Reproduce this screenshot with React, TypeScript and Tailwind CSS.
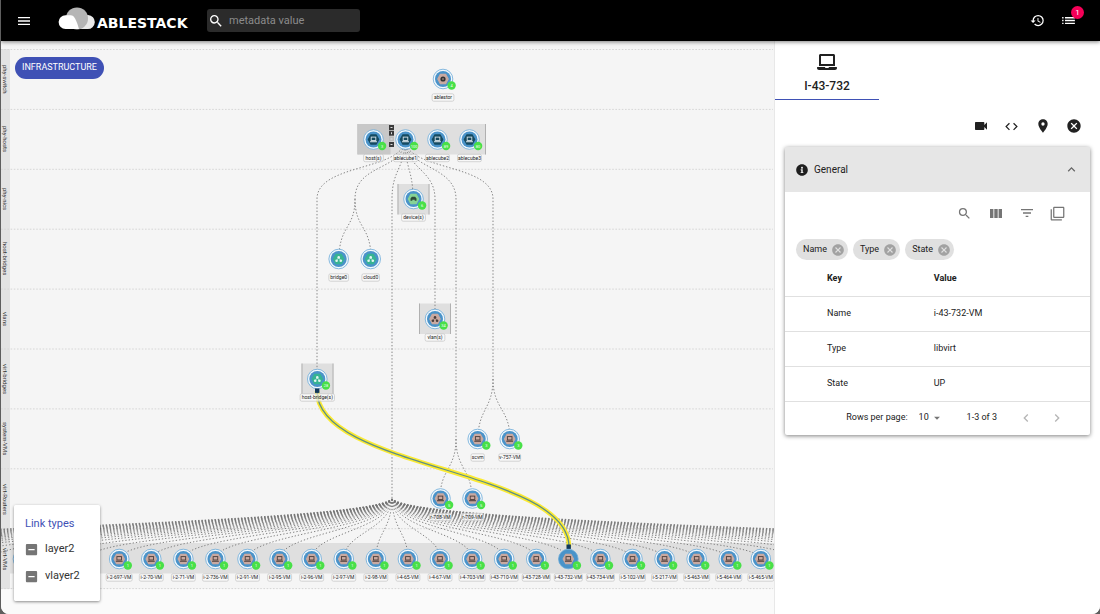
import type { ReactNode } from "react";
import { FaInfoCircle, FaLaptop } from "react-icons/fa";
import {
  MdArrowDropDown,
  MdCancel,
  MdChevronLeft,
  MdChevronRight,
  MdCode,
  MdFilterList,
  MdFilterNone,
  MdHistory,
  MdIndeterminateCheckBox,
  MdKeyboardArrowUp,
  MdList,
  MdLocationOn,
  MdMenu,
  MdSearch,
  MdVideocam,
} from "react-icons/md";

const lanes = [
  "phy-switch",
  "phy-hosts",
  "phy-nics",
  "host-bridges",
  "vlans",
  "virt-bridges",
  "system-VMs",
  "virt-Routers",
  "virt-VMs",
];

type Glyph = "laptop" | "bridge" | "disc" | "port";

interface NodeProps {
  x: number;
  y: number;
  label: string;
  fill: string;
  ink: string;
  glyph: Glyph;
  badge?: string;
  selected?: boolean;
}

const PINK = "#c9a9a1";
const TEAL = "#36b492";
const NAVY = "#154a60";

const HUB_X = 392;
const VM_START = 119.2;
const VM_STEP = 32.08;

const vmNames = [
  "2-697", "2-70", "2-71", "2-736", "2-91", "2-95", "2-96", "2-97", "2-98", "4-65", "4-67",
  "4-703", "43-710", "43-728", "43-732", "43-734", "5-102", "5-217", "5-463", "5-464", "5-465",
];

const vms: NodeProps[] = vmNames.map((name, i) => ({
  x: VM_START + i * VM_STEP,
  y: 559,
  label: `i-${name}-VM`,
  fill: PINK,
  ink: "#4a3c3a",
  glyph: "laptop",
  badge: "1",
  selected: name === "43-732",
}));

const nodes: NodeProps[] = [
  { x: 443, y: 79, label: "ablestor", fill: PINK, ink: "#333", glyph: "disc", badge: "4" },
  { x: 373.5, y: 139.5, label: "host(s)", fill: NAVY, ink: "#d5e2e8", glyph: "laptop", badge: "3" },
  { x: 405.5, y: 139.5, label: "ablecube1", fill: NAVY, ink: "#d5e2e8", glyph: "laptop", badge: "100" },
  { x: 437.5, y: 139.5, label: "ablecube2", fill: NAVY, ink: "#d5e2e8", glyph: "laptop", badge: "89" },
  { x: 469.5, y: 139.5, label: "ablecube3", fill: NAVY, ink: "#d5e2e8", glyph: "laptop", badge: "80" },
  { x: 413.5, y: 199, label: "device(s)", fill: "#86d396", ink: "#2f4a38", glyph: "port", badge: "6" },
  { x: 338.7, y: 259, label: "bridge0", fill: TEAL, ink: "#e3f6f0", glyph: "bridge" },
  { x: 370.7, y: 259, label: "cloud0", fill: TEAL, ink: "#e3f6f0", glyph: "bridge" },
  { x: 435, y: 319, label: "vlan(s)", fill: PINK, ink: "#4a3c3a", glyph: "bridge", badge: "34" },
  { x: 317.3, y: 379, label: "host-bridge(s)", fill: TEAL, ink: "#e3f6f0", glyph: "bridge", badge: "28" },
  { x: 477.7, y: 439, label: "scvm", fill: PINK, ink: "#4a3c3a", glyph: "laptop", badge: "3" },
  { x: 509.7, y: 439, label: "v-757-VM", fill: PINK, ink: "#4a3c3a", glyph: "laptop", badge: "3" },
  { x: 440.5, y: 498.5, label: "r-708-VM", fill: PINK, ink: "#4a3c3a", glyph: "laptop", badge: "5" },
  { x: 472.5, y: 498.5, label: "r-709-VM", fill: PINK, ink: "#4a3c3a", glyph: "laptop", badge: "5" },
];

const links = [
  "M405 139C405 171 317 163 317 199V379",
  "M405 139C405 171 355 163 355 199C355 229 339 225 339 259",
  "M355 199C355 229 371 225 371 259",
  "M405 139C405 169 392 169 392 199V500",
  "M405 139C405 169 413 169 413 199",
  "M405 139C405 169 435 169 435 199V319",
  "M405 139C405 169 456 165 456 199V439C456 469 440 469 440 499",
  "M456 439C456 469 472 469 472 499",
  "M405 139C405 171 493 163 493 199V379C493 409 478 409 478 439",
  "M493 379C493 409 510 409 510 439",
];

const fan = Array.from({ length: 54 }, (_, i) => VM_START + (i - 18) * VM_STEP);

function NodeGlyph({ x, y, glyph, ink }: { x: number; y: number; glyph: Glyph; ink: string }) {
  if (glyph === "laptop")
    return (
      <g fill="none" stroke={ink} strokeWidth={0.9}>
        <rect x={x - 2.3} y={y - 2.4} width={4.6} height={3.4} />
        <path d={`M${x - 3.4} ${y + 2.2}h6.8`} strokeWidth={1.1} />
      </g>
    );
  if (glyph === "bridge")
    return (
      <g fill={ink}>
        <circle cx={x} cy={y - 1.6} r={1.3} />
        <circle cx={x - 2.1} cy={y + 1.7} r={1.3} />
        <circle cx={x + 2.1} cy={y + 1.7} r={1.3} />
        <path d={`M${x - 2} ${y + 1.6}L${x} ${y - 1.6}L${x + 2} ${y + 1.6}`} fill="none" stroke={ink} strokeWidth={0.5} />
      </g>
    );
  if (glyph === "disc")
    return (
      <g>
        <circle cx={x} cy={y} r={2.6} fill={ink} />
        <circle cx={x} cy={y} r={0.8} fill={PINK} />
      </g>
    );
  return <path d={`M${x - 3} ${y + 1.8}v-2.2l1.4-1.8h3.2l1.4 1.8v2.2h-1.8v-1h-2.4v1z`} fill={ink} />;
}

function GraphNode({ x, y, label, fill, ink, glyph, badge, selected }: NodeProps) {
  const width = label.length * 2.1 + 5;
  return (
    <g>
      <circle cx={x} cy={y} r={9.8} fill={selected ? "#4a93c9" : "#f4f9fd"} stroke="#6aa9d8" strokeWidth={0.8} />
      <circle cx={x} cy={y} r={8} fill="#4a93c9" />
      <path d={`M${x - 5.2} ${y}l2.600-4.600h5.200l2.600 4.600l-2.600 4.600h-5.200z`} fill={fill} stroke={fill} strokeWidth={1.2} strokeLinejoin="round" />
      <NodeGlyph x={x} y={y} glyph={glyph} ink={ink} />
      {badge && (
        <>
          <circle cx={x + 8.6} cy={y + 6.5} r={4.2} fill="#48e048" />
          <text x={x + 8.6} y={y + 8} fontSize={4} textAnchor="middle" fill="#f2fff2">
            {badge}
          </text>
        </>
      )}
      <rect
        x={x - width / 2}
        y={y + 14.8}
        width={width}
        height={7.4}
        rx={1.6}
        fill="#fafafa"
        fillOpacity={0.7}
        stroke="#c4c4c4"
        strokeWidth={0.7}
      />
      <text x={x} y={y + 20} fontSize={5} textAnchor="middle" fill="#222">
        {label}
      </text>
    </g>
  );
}

function GroupBox({ x, y, width }: { x: number; y: number; width: number }) {
  return (
    <g>
      <rect x={x} y={y} width={width} height={30.5} fill="#dfdfdf" />
      <path d={`M${x + 0.5} ${y}v30.5M${x + width - 0.5} ${y}v30.5`} stroke="#b0b0b0" />
    </g>
  );
}

function Topology() {
  return (
    <svg
      className="pointer-events-none absolute inset-0 h-full w-full"
      fontFamily="Roboto, sans-serif"
      role="img"
      aria-label="Infrastructure topology"
    >
      <g transform="translate(-1 -41)">
        <g stroke="#d6d6d6" strokeDasharray="1.6 1.6">
          {Array.from({ length: 10 }, (_, i) => (
            <line key={i} x1={1} x2="100%" y1={49.5 + i * 59.9} y2={49.5 + i * 59.9} />
          ))}
        </g>
        <GroupBox x={357.5} y={124} width={128.5} />
        <rect x={358.5} y={124} width={32} height={30.5} fill="#c8c8c8" />
        <GroupBox x={397.5} y={184} width={32} />
        <GroupBox x={419} y={303.5} width={32} />
        <GroupBox x={301.5} y={363.5} width={32} />
        <rect x={10} y={543} width="100%" height={30.5} fill="#dfdfdf" />
        <g fill="none" stroke="#858585" strokeDasharray="1.4 1.9">
          {links.map((d) => (
            <path key={d} d={d} />
          ))}
        </g>
        <g fill="none" stroke="#747474" strokeWidth={0.9} strokeDasharray="1.3 2">
          {fan.map((x) => (
            <path key={x} d={`M392 499C${HUB_X + (x - HUB_X) * 0.04} 530 ${x} 533 ${x} 559`} />
          ))}
        </g>
        <g fill="none">
          <path d="M317 391C317 469 569 469 569 547" stroke="#fbea32" strokeWidth={4.6} />
          <path d="M317 391C317 469 569 469 569 547" stroke="#5f8f86" strokeWidth={1.3} />
        </g>
        {nodes.map((n) => (
          <GraphNode key={n.label} {...n} />
        ))}
        <g>
          <rect x={389} y={125} width={5} height={5} fill="#3a3a3a" />
          <rect x={389} y={130.7} width={5} height={5} fill="#3a3a3a" />
          <rect x={389} y={136.4} width={5} height={5} fill="#bdbdbd" />
          <rect x={389} y={142} width={5} height={5} fill="#3a3a3a" />
          <path d="M390.500 127.500h2M391.500 132.200v2M390.500 139h2M390.500 144.500h2" stroke="#eee" strokeWidth={0.9} />
        </g>
        {vms.map((n) => (
          <GraphNode key={n.label} {...n} />
        ))}
        <circle cx={VM_START - 3 * VM_STEP} cy={559} r={9.8} fill="#f4f9fd" stroke="#6aa9d8" strokeWidth={0.8} />
        <rect x={315} y={388.5} width={4.4} height={4.4} fill="#12395a" />
        <rect x={566.5} y={544.5} width={4.4} height={4.4} fill="#12395a" />
      </g>
    </svg>
  );
}

function Logo() {
  return (
    <div className="flex items-center gap-[2px] text-white">
      <svg width="37" height="23" viewBox="0 0 37 23" aria-hidden="true">
        <path d="M19 22h10.500a7 7 0 0 0 .6-14L22 9z" fill="#e9e9e9" />
        <circle cx="19" cy="11.400" r="11" fill="#b5b5b5" />
        <path d="M7.500 8.200h5.200c3.600 0 5.600 4.600 8.300 13.800H7.500a6.900 6.900 0 0 1 0-13.800z" fill="#fff" />
      </svg>
      <span className="mt-[8px] font-['DejaVu_Sans'] text-[14px] leading-[14px] font-bold">ABLESTACK</span>
    </div>
  );
}

function IconButton({ label, children, className = "" }: { label: string; children: ReactNode; className?: string }) {
  return (
    <button type="button" aria-label={label} className={`flex h-[31px] w-[31px] items-center justify-center ${className}`}>
      {children}
    </button>
  );
}

function Header() {
  return (
    <header className="relative z-20 flex h-[41px] items-center bg-black pr-4 pl-[7px] text-white shadow-[0_1px_4px_rgba(0,0,0,0.5)]">
      <IconButton label="Menu">
        <MdMenu size={16} />
      </IconButton>
      <div className="ml-[19px] w-[130px] flex-none pb-1">
        <Logo />
      </div>
      <label className="ml-[19px] flex h-[23px] w-[153px] items-center gap-[5px] rounded-[3px] bg-[#2b2b2b]">
        <MdSearch size={16} className="ml-px flex-none" />
        <input
          type="text"
          aria-label="Search metadata"
          placeholder="metadata value"
          className="h-[23px] w-full min-w-0 bg-transparent text-[11px] outline-none placeholder:text-[#8b8b8b]"
        />
      </label>
      <div className="ml-auto flex">
        <IconButton label="History">
          <MdHistory size={15} />
        </IconButton>
        <IconButton label="Notifications" className="relative">
          <MdList size={17} />
          <span className="absolute top-[1px] right-0 flex h-[13px] w-[13px] items-center justify-center rounded-full bg-[#f50057] text-[8px] leading-none">
            1
          </span>
        </IconButton>
      </div>
    </header>
  );
}

function Canvas() {
  return (
    <main className="relative min-w-0 flex-1 overflow-hidden bg-[#fafafa]">
      <div className="bg-[#f5f5f5] pt-2">
        {lanes.map((lane) => (
          <div key={lane} className="flex h-[60px]">
            <div className="flex w-[9px] items-center justify-center bg-[#e3e3e3] text-[6px] leading-[9px] text-[#333] [writing-mode:vertical-rl]">
              {lane}
            </div>
          </div>
        ))}
      </div>
      <Topology />
      <button
        type="button"
        className="absolute top-4 left-[14px] h-[22px] rounded-full bg-[#3f51b5] px-[7px] text-[9px] text-white"
      >
        INFRASTRUCTURE
      </button>
      <fieldset className="absolute bottom-[13px] left-[13px] flex h-[96px] w-[86px] flex-col rounded-[2px] bg-white pt-3 pl-[11px] text-[11px] text-[#333] shadow-[0_1px_3px_rgba(0,0,0,0.45)]">
        <span className="leading-[13px] text-[#3f51b5]">Link types</span>
        <div className="mt-[6px] flex flex-col">
          {["layer2", "vlayer2"].map((name) => (
            <label key={name} className="flex h-[27px] items-center gap-[6px]">
              <input type="checkbox" className="sr-only" />
              <MdIndeterminateCheckBox size={15} className="-ml-px text-[#757575]" />
              {name}
            </label>
          ))}
        </div>
      </fieldset>
    </main>
  );
}

function ColumnsIcon() {
  return (
    <svg width="12" height="9" viewBox="0 0 12 9" fill="currentColor" aria-hidden="true">
      <path d="M0 0h3.400v9H0zM4.300 0h3.400v9H4.300zM8.600 0H12v9H8.600z" />
    </svg>
  );
}

function DetailCard() {
  const rows = [
    ["Name", "i-43-732-VM"],
    ["Type", "libvirt"],
    ["State", "UP"],
  ];
  return (
    <section className="mx-[10px] rounded-[2px] bg-white text-[9px] shadow-[0_1px_4px_rgba(0,0,0,0.5)]">
      <button type="button" className="flex h-[45px] w-full items-center gap-[6px] bg-[#e6e6e6] px-[11px]">
        <FaInfoCircle size={12} className="text-[#1f1f1f]" />
        <span className="text-[10px]">General</span>
        <MdKeyboardArrowUp size={15} className="ml-auto text-[#666]" />
      </button>
      <div className="flex h-[42px] items-center justify-end pr-[17px] text-[#757575]">
        <IconButton label="Search">
          <MdSearch size={15} />
        </IconButton>
        <IconButton label="View columns">
          <ColumnsIcon />
        </IconButton>
        <IconButton label="Filter table">
          <MdFilterList size={16} />
        </IconButton>
        <IconButton label="Copy">
          <MdFilterNone size={15} />
        </IconButton>
      </div>
      <div className="mt-[5px] flex gap-[5px] pl-[11px]">
        {["Name", "Type", "State"].map((chip) => (
          <span key={chip} className="flex h-[21px] items-center gap-1 rounded-full bg-[#e0e0e0] pr-[3px] pl-[7px]">
            {chip}
            <button type="button" aria-label={`Remove ${chip}`} className="text-[#a2a2a2]">
              <MdCancel size={14} />
            </button>
          </span>
        ))}
      </div>
      <table className="w-full table-fixed border-collapse text-left">
        <thead>
          <tr className="h-[36px] border-b border-[#e0e0e0]">
            <th className="w-[35%] pt-[2px] pl-[42px] font-bold">Key</th>
            <th className="pt-[2px] pl-[42px] font-bold">Value</th>
          </tr>
        </thead>
        <tbody>
          {rows.map(([key, value]) => (
            <tr key={key} className="h-[35px] border-b border-[#e0e0e0]">
              <td className="pt-px pl-[42px]">{key}</td>
              <td className="pt-px pl-[42px]">{value}</td>
            </tr>
          ))}
        </tbody>
      </table>
      <div className="flex h-[33px] items-center justify-end pr-[18px]">
        <label htmlFor="rows-per-page">Rows per page:</label>
        <div className="relative ml-[11px] flex items-center">
          <select id="rows-per-page" defaultValue="10" className="w-[24px] appearance-none bg-transparent outline-none">
            <option>10</option>
            <option>20</option>
          </select>
          <MdArrowDropDown size={14} className="pointer-events-none absolute -right-[1px] text-[#757575]" />
        </div>
        <span className="mr-[13px] ml-[24px]">1-3 of 3</span>
        <IconButton label="Previous page" className="text-[#b5b5b5]">
          <MdChevronLeft size={16} />
        </IconButton>
        <IconButton label="Next page" className="text-[#b5b5b5]">
          <MdChevronRight size={16} />
        </IconButton>
      </div>
    </section>
  );
}

function Sidebar() {
  return (
    <aside className="w-[326px] flex-none border-l border-[#e8e8e8] bg-white text-[#212121]">
      <button
        type="button"
        className="flex h-[59px] w-[104px] flex-col items-center border-b border-[#3f51b5] pt-[11px] text-[12px] font-medium"
      >
        <FaLaptop size={20} />
        <span className="mt-[6px] leading-[16px]">I-43-732</span>
      </button>
      <div className="flex h-[47px] items-center justify-end pt-[5px] pr-[11px]">
        <IconButton label="Capture">
          <MdVideocam size={16} />
        </IconButton>
        <IconButton label="Query">
          <MdCode size={15} />
        </IconButton>
        <IconButton label="Locate">
          <MdLocationOn size={16} />
        </IconButton>
        <IconButton label="Close">
          <MdCancel size={16} />
        </IconButton>
      </div>
      <DetailCard />
    </aside>
  );
}

export default function App() {
  return (
    <div className="flex min-h-screen bg-[#5e5e5e] pl-px font-['Roboto',sans-serif]">
      <div className="flex min-w-0 flex-1 flex-col overflow-hidden rounded-b-lg bg-white">
        <Header />
        <div className="flex flex-1">
          <Canvas />
          <Sidebar />
        </div>
      </div>
    </div>
  );
}
